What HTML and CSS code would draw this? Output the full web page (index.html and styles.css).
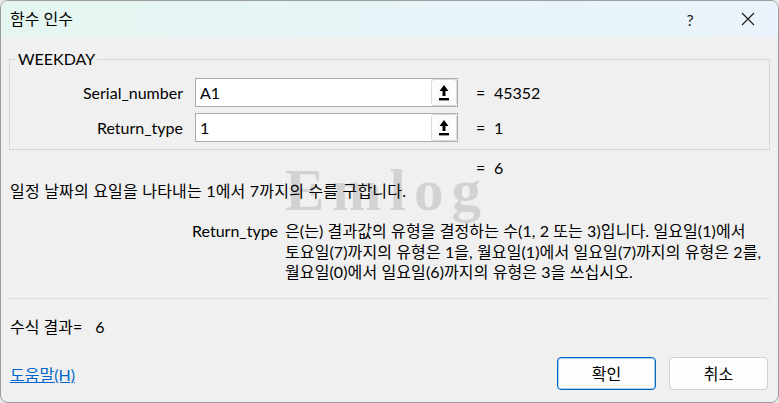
FILE: index.html
```html
<!DOCTYPE html>
<html lang="ko">
<head>
  <meta charset="UTF-8" />
  <meta name="viewport" content="width=device-width, initial-scale=1.0" />
  <title>함수 인수</title>
  <link rel="stylesheet" href="styles.css">
</head>
<body>

  <div class="window">
    <header class="titlebar">
      <span class="title">함수 인수</span>
      <button class="cap-btn help-btn">?</button>
      <button class="cap-btn close-btn">
        <svg width="14" height="14" viewBox="0 0 14 14">
          <path d="M1 1 L13 13 M13 1 L1 13" stroke="#1a1a1a" stroke-width="1.1" fill="none" />
        </svg>
      </button>
    </header>

    <main class="content">
      <div class="watermark">Emlog</div>

      <fieldset class="group">
        <legend>WEEKDAY</legend>

        <div class="arg-row">
          <label class="arg-label">Serial_number</label>
          <div class="arg-input">
            <span class="arg-text">A1</span>
            <span class="collapse-btn">
              <svg width="10" height="17" viewBox="0 0 10 17">
                <path d="M5 1 L9.5 7 L6.5 7 L6.5 12 L3.5 12 L3.5 7 L0.5 7 Z" fill="#000" />
                <rect x="0" y="14" width="10" height="2.4" fill="#000" />
              </svg>
            </span>
          </div>
          <span class="eq">=</span>
          <span class="eq-value">45352</span>
        </div>

        <div class="arg-row">
          <label class="arg-label">Return_type</label>
          <div class="arg-input">
            <span class="arg-text">1</span>
            <span class="collapse-btn">
              <svg width="10" height="17" viewBox="0 0 10 17">
                <path d="M5 1 L9.5 7 L6.5 7 L6.5 12 L3.5 12 L3.5 7 L0.5 7 Z" fill="#000" />
                <rect x="0" y="14" width="10" height="2.4" fill="#000" />
              </svg>
            </span>
          </div>
          <span class="eq">=</span>
          <span class="eq-value">1</span>
        </div>
      </fieldset>

      <div class="func-result">
        <span class="eq">=</span>
        <span class="eq-value">6</span>
      </div>

      <p class="func-desc">일정 날짜의 요일을 나타내는 1에서 7까지의 수를 구합니다.</p>

      <div class="arg-help">
        <span class="arg-help-name">Return_type</span>
        <p class="arg-help-text">은(는) 결과값의 유형을 결정하는 수(1, 2 또는 3)입니다. 일요일(1)에서<br>토요일(7)까지의 유형은 1을, 월요일(1)에서 일요일(7)까지의 유형은 2를,<br>월요일(0)에서 일요일(6)까지의 유형은 3을 쓰십시오.</p>
      </div>

      <hr class="divider">

      <div class="formula-result">수식 결과=<span class="formula-value">6</span></div>

      <footer class="dialog-footer">
        <a href="#" class="help-link">도움말(H)</a>
        <div class="actions">
          <button class="btn btn-default">확인</button>
          <button class="btn">취소</button>
        </div>
      </footer>
    </main>
  </div>

</body>
</html>
```

FILE: styles.css
```css
* {
  margin: 0;
  padding: 0;
  box-sizing: border-box;
}

body {
  width: 779px;
  height: 403px;
  background: #e8e8e8;
  font-family: "Lato", "Noto Sans CJK KR", sans-serif;
  font-size: 16px;
  color: #000;
  overflow: hidden;
}

.window {
  width: 779px;
  height: 403px;
  border: 1px solid #9c9c9c;
  border-radius: 8px;
  background: #f0f0f0;
  overflow: hidden;
  display: flex;
  flex-direction: column;
}

/* title bar */
.titlebar {
  height: 36px;
  display: flex;
  align-items: center;
  padding-left: 9px;
  background: linear-gradient(90deg, #e5f6f0, #e8f4f9 60%, #eaf3fb);
}

.title {
  flex: 1;
  line-height: 20px;
}

.cap-btn {
  height: 36px;
  border: none;
  background: transparent;
  font-family: inherit;
  font-size: 16px;
  color: #1a1a1a;
  display: flex;
  align-items: center;
  justify-content: center;
}

.help-btn {
  width: 56px;
}

.close-btn {
  width: 60px;
}

/* dialog body */
.content {
  flex: 1;
  position: relative;
  padding: 0 8px;
  line-height: 20px;
}

.watermark {
  position: absolute;
  left: 284px;
  top: 118px;
  font-family: "Liberation Serif", serif;
  font-weight: bold;
  font-size: 59px;
  line-height: 70px;
  letter-spacing: 8px;
  color: rgba(0, 0, 0, 0.12);
  pointer-events: none;
}

.group {
  margin-top: 12px;
  border: 1px solid #d6d6d6;
  padding: 9px 0 7px 0;
  display: flex;
  flex-direction: column;
  gap: 6px;
}

.group legend {
  margin-left: 6px;
  padding: 0 2px;
  line-height: 20px;
  color: #000;
}

.arg-row {
  display: flex;
  align-items: center;
  height: 29px;
}

.arg-label {
  width: 173px;
  margin-right: 12px;
  text-align: right;
}

.arg-input {
  width: 263px;
  height: 29px;
  border: 1px solid #acacac;
  background: #fff;
  display: flex;
  align-items: center;
  justify-content: space-between;
  padding-left: 4px;
}

.collapse-btn {
  width: 26px;
  height: 27px;
  border: 1px solid #d9d9d9;
  border-radius: 3px;
  background: #fbfbfb;
  display: flex;
  align-items: center;
  justify-content: center;
}

.eq {
  width: 18px;
}

.arg-row .eq {
  margin-left: 18px;
}

.func-result {
  margin-top: 8px;
  padding-left: 467px;
  display: flex;
}

.func-desc {
  margin-top: 3px;
  padding-left: 1px;
  letter-spacing: 0.2px;
}

.arg-help {
  margin-top: 20px;
  margin-left: 183px;
  display: grid;
  grid-template-columns: 93px auto;
  justify-content: start;
  line-height: 20.5px;
}

.arg-help-text {
  white-space: nowrap;
  letter-spacing: 0.1px;
}

.divider {
  margin-top: 15px;
  border: none;
  border-top: 1px solid #dcdcdc;
}

.formula-result {
  margin-top: 18px;
  padding-left: 1px;
}

.formula-value {
  margin-left: 13px;
}

.dialog-footer {
  margin-top: 20px;
  display: flex;
  align-items: center;
  justify-content: space-between;
  padding: 0 2px 0 1px;
}

.help-link {
  color: #0066cc;
  text-decoration: underline;
  margin-top: 3px;
}

.actions {
  display: flex;
  gap: 13px;
}

.btn {
  width: 99px;
  height: 33px;
  border: 1px solid #d0d0d0;
  border-radius: 4px;
  background: #fdfdfd;
  font-family: inherit;
  font-size: 16px;
  color: #000;
}

.btn-default {
  border-color: #0067c0;
  box-shadow: inset 0 0 0 1px rgba(0, 103, 192, 0.3);
}
```
